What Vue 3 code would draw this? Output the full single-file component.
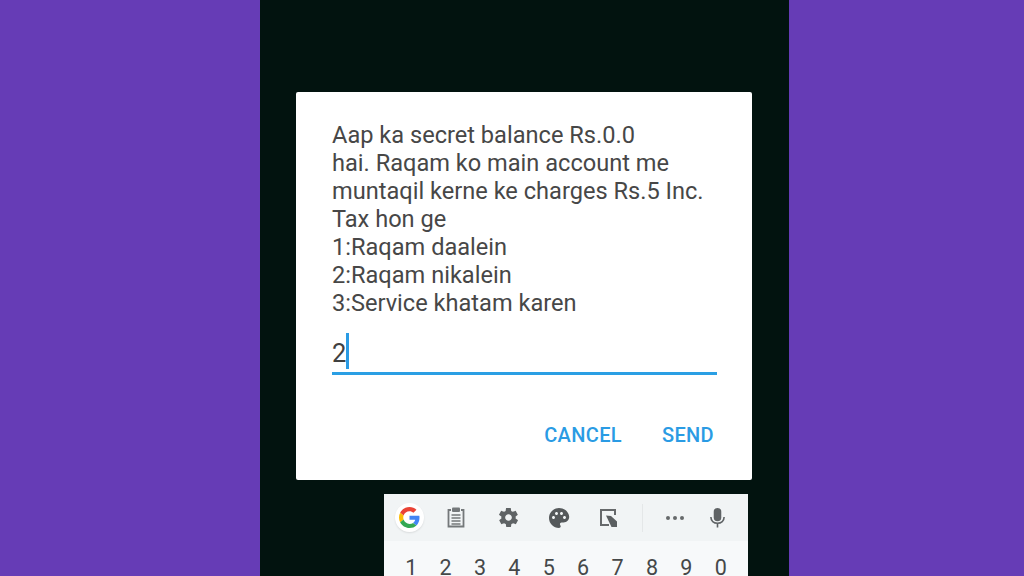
<script setup>
const lines = [
  'Aap ka secret balance Rs.0.0',
  'hai. Raqam ko main account me',
  'muntaqil kerne ke charges Rs.5 Inc.',
  'Tax hon ge',
  '1:Raqam daalein',
  '2:Raqam nikalein',
  '3:Service khatam karen'
]
const digits = ['1','2','3','4','5','6','7','8','9','0']
</script>

<template>
  <div class="page">
    <div class="phone">
      <section class="dialog">
        <p v-for="l in lines" :key="l" class="line">{{ l }}</p>
        <div class="field"><span class="value">2</span><span class="caret"></span></div>
        <div class="actions">
          <span class="act">CANCEL</span>
          <span class="act">SEND</span>
        </div>
      </section>
      <section class="keyboard">
        <div class="tools">
          <div class="g">
            <svg width="21" height="21" viewBox="0 0 48 48">
              <path fill="#EA4335" d="M24 9.500c3.500 0 6.700 1.300 9.100 3.500l6.800-6.800C35.800 2.400 30.300 0 24 0 14.600 0 6.500 5.400 2.600 13.200l7.900 6.200C12.400 13.600 17.700 9.500 24 9.500z"/>
              <path fill="#4285F4" d="M46.900 24.500c0-1.600-.1-3.100-.4-4.500H24v9h12.900c-.6 3-2.200 5.400-4.700 7.100l7.600 5.900c4.400-4.100 7.100-10.200 7.100-17.500z"/>
              <path fill="#FBBC05" d="M10.500 28.600c-.5-1.400-.8-3-.8-4.600s.3-3.200.8-4.600l-7.900-6.200C.9 16.500 0 20.100 0 24s.9 7.500 2.600 10.800l7.900-6.200z"/>
              <path fill="#34A853" d="M24 48c6.500 0 11.900-2.100 15.800-5.800l-7.600-5.900c-2.100 1.400-4.900 2.300-8.200 2.300-6.300 0-11.600-4.100-13.500-9.900l-7.900 6.200C6.500 42.600 14.600 48 24 48z"/>
            </svg>
          </div>
          <svg class="ic clip" width="18" height="21" viewBox="0 0 18 21">
            <path fill="none" stroke="#74787a" stroke-width="1.800" d="M4 3H1.500v16.500h15V3H14"/>
            <rect x="5" y="0.500" width="8" height="4.500" rx="1" fill="#74787a"/>
            <path stroke="#74787a" stroke-width="1.500" d="M4.500 8h9M4.500 11h9M4.500 14h9M4.500 17h9"/>
          </svg>
          <svg class="ic gear" width="23" height="23" viewBox="0 0 24 24">
            <path fill="#5f6365" d="M19.400 13c.1-.3.100-.7.100-1s0-.7-.1-1l2.100-1.600c.2-.2.200-.4.100-.6l-2-3.500c-.1-.2-.4-.3-.6-.2l-2.500 1c-.5-.4-1.100-.7-1.700-1l-.4-2.700c0-.2-.2-.4-.5-.4h-4c-.2 0-.4.200-.5.400l-.4 2.700c-.6.300-1.200.6-1.700 1l-2.500-1c-.2-.1-.5 0-.6.200l-2 3.500c-.1.200-.1.500.1.600L4.600 11c-.1.300-.1.700-.1 1s0 .7.100 1l-2.100 1.600c-.2.200-.2.400-.1.600l2 3.500c.1.200.4.300.6.200l2.500-1c.5.400 1.100.7 1.700 1l.4 2.700c0 .2.200.4.500.4h4c.2 0 .4-.2.500-.4l.4-2.700c.6-.3 1.200-.6 1.700-1l2.500 1c.2.100.5 0 .6-.2l2-3.500c.1-.2.100-.5-.1-.6L19.400 13zM12 15.500c-1.900 0-3.500-1.600-3.500-3.500s1.600-3.500 3.500-3.500 3.500 1.600 3.500 3.500-1.600 3.500-3.500 3.500z"/>
          </svg>
          <svg class="ic palette" width="24" height="24" viewBox="0 0 24 24">
            <path fill="#55595b" d="M12 2C6.500 2 2 6.500 2 12s4.500 10 10 10c.9 0 1.700-.7 1.700-1.700 0-.4-.2-.8-.4-1.100-.3-.3-.4-.7-.4-1.100 0-.9.700-1.700 1.700-1.700h2c3.100 0 5.600-2.500 5.600-5.600C22 6 17.500 2 12 2zM6.500 13C5.700 13 5 12.300 5 11.500S5.700 10 6.500 10 8 10.700 8 11.500 7.300 13 6.500 13zm3-4C8.700 9 8 8.300 8 7.500S8.700 6 9.500 6 11 6.700 11 7.500 10.300 9 9.500 9zm5 0c-.8 0-1.500-.7-1.500-1.500S13.700 6 14.500 6 16 6.700 16 7.500 15.300 9 14.500 9zm3 4c-.8 0-1.500-.7-1.500-1.500s.7-1.500 1.500-1.500 1.500.7 1.500 1.500-.7 1.500-1.500 1.500z"/>
          </svg>
          <svg class="ic resize" width="20" height="20" viewBox="0 0 20 20">
            <path fill="none" stroke="#66696b" stroke-width="2" d="M16 7V2H2v15h8"/>
            <path fill="#5b5f61" d="M7 7.500l5 .5 6 5.500V19h-5.500z"/>
          </svg>
          <span class="divider"></span>
          <div class="dots"><i></i><i></i><i></i></div>
          <svg class="ic mic" width="17" height="22" viewBox="0 0 18 22">
            <rect x="5" y="0.500" width="8" height="14" rx="4" fill="#5f6365"/>
            <path fill="none" stroke="#5f6365" stroke-width="1.700" d="M2 10c0 4 3 6.500 7 6.500s7-2.500 7-6.500M9 16.500V21"/>
          </svg>
        </div>
        <div class="digits">
          <span v-for="d in digits" :key="d">{{ d }}</span>
        </div>
      </section>
    </div>
  </div>
</template>

<style>
html, body { margin: 0; height: 100%; overflow: hidden; }
</style>

<style scoped>
.page {
  width: 1024px;
  height: 576px;
  overflow: hidden;
  background: #663cb6;
  display: flex;
  justify-content: flex-start;
  padding-left: 260px;
  box-sizing: border-box;
  font-family: Roboto, "Liberation Sans", sans-serif;
}
.phone {
  width: 529px;
  height: 576px;
  background: #02130f;
  box-sizing: border-box;
  padding-top: 92px;
  overflow: hidden;
}
.dialog {
  margin-left: 36px;
  width: 456px;
  height: 388px;
  box-sizing: border-box;
  background: #fff;
  border-radius: 2px;
  padding: 29px 36px 0;
  display: flex;
  flex-direction: column;
}
.line {
  margin: 0;
  font-size: 23.600px;
  line-height: 28px;
  color: #474747;
  white-space: nowrap;
}
.field {
  margin-top: 16px;
  height: 39px;
  border-bottom: 3px solid #2a9fe4;
  display: flex;
  align-items: flex-end;
  width: 385px;
}
.value {
  font-size: 25.500px;
  line-height: 34px;
  color: #404040;
  margin-bottom: 2px;
}
.caret {
  width: 2.500px;
  height: 36px;
  background: #2a9be4;
  margin-bottom: 3px;
}
.actions {
  margin-top: 48px;
  display: flex;
  justify-content: flex-end;
  gap: 40px;
  padding-right: 2px;
}
.act {
  color: #2a9be4;
  font-size: 20px;
  font-weight: 500;
  line-height: 24px;
  letter-spacing: 0.350px;
}
.keyboard {
  margin-top: 14px;
  margin-left: 124px;
  width: 364px;
  height: 82px;
  background: #f7f9fa;
  overflow: hidden;
}
.tools {
  height: 47px;
  display: flex;
  align-items: center;
  background: #f1f4f5;
  padding-left: 11px;
  box-sizing: border-box;
  width: 100%;
}
.g {
  width: 29px;
  height: 29px;
  border-radius: 50%;
  background: #fff;
  box-shadow: 0 1px 2px rgba(0,0,0,.1);
  display: flex;
  align-items: center;
  justify-content: center;
  flex: none;
}
.ic { flex: none; display: block; }
.clip { margin-left: 23px; }
.gear { margin-left: 32px; }
.palette { margin-left: 27px; }
.resize { margin-left: 28px; }
.divider { width: 1px; height: 28px; background: #e4e7e8; margin-left: 23px; flex: none; }
.dots { display: flex; gap: 3px; margin-left: 23px; flex: none; }
.dots i { width: 4px; height: 4px; border-radius: 50%; background: #66696b; display: block; }
.mic { margin-left: 25px; }
.digits {
  display: flex;
  padding-left: 10px;
  padding-top: 14px;
}
.digits span {
  width: 34.400px;
  text-align: center;
  flex: none;
  font-size: 21.500px;
  line-height: 26px;
  color: #454849;
}
</style>
